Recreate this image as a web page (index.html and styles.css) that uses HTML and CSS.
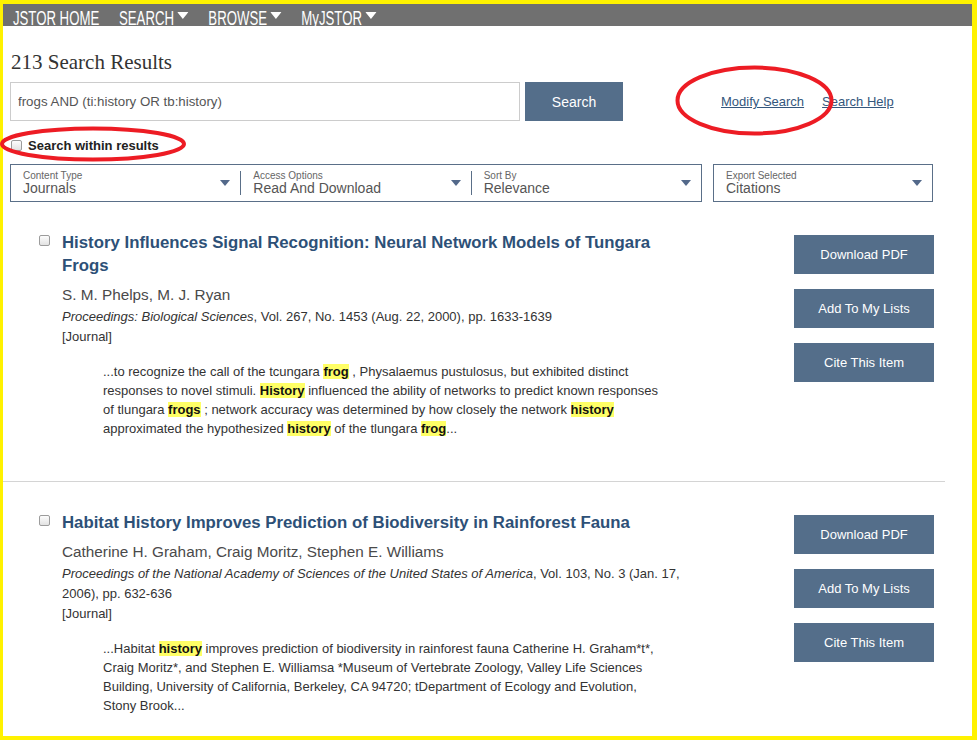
FILE: index.html
```html
<!DOCTYPE html>
<html lang="en">
<head>
    <meta charset="UTF-8">
    <title>JSTOR Search Results</title>
    <link rel="stylesheet" href="styles.css">
</head>
<body>
    <div class="frame">
        <nav class="topnav">
            <ul class="topnav-links">
                <li><a href="#">JSTOR HOME</a></li>
                <li><a href="#">SEARCH</a><svg class="nav-caret" viewBox="0 0 17 7"><polygon points="0,0 17,0 8.5,7"/></svg></li>
                <li><a href="#">BROWSE</a><svg class="nav-caret" viewBox="0 0 17 7"><polygon points="0,0 17,0 8.5,7"/></svg></li>
                <li><a href="#">MyJSTOR</a><svg class="nav-caret" viewBox="0 0 17 7"><polygon points="0,0 17,0 8.5,7"/></svg></li>
            </ul>
        </nav>

        <div class="search-area">
            <h1 class="results-count">213 Search Results</h1>

            <div class="search-row">
                <input type="text" class="search-input" value="frogs AND (ti:history OR tb:history)">
                <button type="button" class="btn search-btn">Search</button>
                <a href="#" class="search-link modify">Modify Search</a>
                <a href="#" class="search-link">Search Help</a>
            </div>

            <label class="within">
                <span class="check"></span>Search within results
            </label>

            <div class="filters">
                <div class="filter-group">
                    <div class="filter">
                        <div class="filter-text">
                            <span class="filter-label">Content Type</span>
                            <span class="filter-value">Journals</span>
                        </div>
                        <svg class="filter-caret" viewBox="0 0 10 6"><polygon points="0,0 10,0 5,6"/></svg>
                    </div>
                    <div class="filter">
                        <div class="filter-text">
                            <span class="filter-label">Access Options</span>
                            <span class="filter-value">Read And Download</span>
                        </div>
                        <svg class="filter-caret" viewBox="0 0 10 6"><polygon points="0,0 10,0 5,6"/></svg>
                    </div>
                    <div class="filter">
                        <div class="filter-text">
                            <span class="filter-label">Sort By</span>
                            <span class="filter-value">Relevance</span>
                        </div>
                        <svg class="filter-caret" viewBox="0 0 10 6"><polygon points="0,0 10,0 5,6"/></svg>
                    </div>
                </div>
                <div class="filter-group export">
                    <div class="filter">
                        <div class="filter-text">
                            <span class="filter-label">Export Selected</span>
                            <span class="filter-value">Citations</span>
                        </div>
                        <svg class="filter-caret" viewBox="0 0 10 6"><polygon points="0,0 10,0 5,6"/></svg>
                    </div>
                </div>
            </div>
        </div>

        <ol class="results">
            <li class="result">
                <span class="check result-check"></span>
                <div class="result-body">
                    <a href="#" class="result-title">History Influences Signal Recognition: Neural Network Models of Tungara Frogs</a>
                    <div class="result-authors">S. M. Phelps, M. J. Ryan</div>
                    <div class="result-cite"><em>Proceedings: Biological Sciences</em>, Vol. 267, No. 1453 (Aug. 22, 2000), pp. 1633-1639</div>
                    <div class="result-type">[Journal]</div>
                    <p class="snippet">...to recognize the call of the tcungara <mark>frog</mark> , Physalaemus pustulosus, but exhibited distinct responses to novel stimuli. <mark>History</mark> influenced the ability of networks to predict known responses of tlungara <mark>frogs</mark> ; network accuracy was determined by how closely the network <mark>history</mark> approximated the hypothesized <mark>history</mark> of the tlungara <mark>frog</mark>...</p>
                </div>
                <div class="result-actions">
                    <button type="button" class="btn">Download PDF</button>
                    <button type="button" class="btn">Add To My Lists</button>
                    <button type="button" class="btn">Cite This Item</button>
                </div>
            </li>
            <li class="result">
                <span class="check result-check"></span>
                <div class="result-body">
                    <a href="#" class="result-title">Habitat History Improves Prediction of Biodiversity in Rainforest Fauna</a>
                    <div class="result-authors">Catherine H. Graham, Craig Moritz, Stephen E. Williams</div>
                    <div class="result-cite"><em>Proceedings of the National Academy of Sciences of the United States of America</em>, Vol. 103, No. 3 (Jan. 17, 2006), pp. 632-636</div>
                    <div class="result-type">[Journal]</div>
                    <p class="snippet">...Habitat <mark>history</mark> improves prediction of biodiversity in rainforest fauna Catherine H. Graham*t*, Craig Moritz*, and Stephen E. Williamsa *Museum of Vertebrate Zoology, Valley Life Sciences Building, University of California, Berkeley, CA 94720; tDepartment of Ecology and Evolution, Stony Brook...</p>
                </div>
                <div class="result-actions">
                    <button type="button" class="btn">Download PDF</button>
                    <button type="button" class="btn">Add To My Lists</button>
                    <button type="button" class="btn">Cite This Item</button>
                </div>
            </li>
        </ol>
    </div>

    <!-- hand-drawn annotation marks over the page -->
    <svg class="annotations" width="977" height="740" viewBox="0 0 977 740">
        <ellipse cx="754.5" cy="100.5" rx="77" ry="33" />
        <ellipse cx="93" cy="144" rx="91" ry="15.5" />
    </svg>
</body>
</html>
```

FILE: styles.css
```css
* {
    box-sizing: border-box;
    margin: 0;
    padding: 0;
}

body {
    font-family: "Liberation Sans", Arial, sans-serif;
    background-color: #fff;
    color: #333;
    position: relative;
    width: 977px;
    height: 740px;
    overflow: hidden;
}

.frame {
    height: 740px;
    border-style: solid;
    border-color: #fff200;
    border-width: 4px 5px 4px 3px;
    overflow: hidden;
}

/* top navigation (condensed caps) */
.topnav {
    height: 22px;
    background-color: #707070;
    overflow: hidden;
}

.topnav-links {
    list-style: none;
    display: flex;
    padding: 6px 0 0 15px;
    font-size: 20px;
    line-height: 16px;
    transform: scaleX(0.66);
    transform-origin: left top;
}

.topnav-links li {
    display: flex;
    align-items: flex-start;
    margin-right: 30px;
}

.topnav-links a {
    color: #fff;
    text-decoration: none;
}

.nav-caret {
    width: 17px;
    height: 7px;
    margin: 2px 0 0 5px;
    fill: #fff;
}

/* search header */
.search-area {
    padding: 0 7px;
}

.results-count {
    font-family: "Liberation Serif", "Times New Roman", serif;
    font-weight: normal;
    font-size: 21px;
    line-height: 24px;
    color: #333;
    margin-top: 24px;
    padding-left: 1px;
}

.search-row {
    display: flex;
    align-items: center;
    margin-top: 8px;
}

.search-input {
    width: 510px;
    height: 39px;
    border: 1px solid #ccc;
    padding: 0 7px;
    font-family: inherit;
    font-size: 13.3px;
    color: #555;
}

.btn {
    background-color: #546e8a;
    color: #fff;
    border: none;
    font-family: inherit;
    font-size: 13px;
    cursor: pointer;
}

.search-btn {
    width: 98px;
    height: 39px;
    margin-left: 5px;
    font-size: 14px;
}

.search-link {
    font-size: 13px;
    color: #34577d;
    margin-left: 18px;
}

.search-link.modify {
    margin-left: 98px;
}

.within {
    display: flex;
    align-items: center;
    height: 16px;
    margin-top: 16px;
    padding-left: 1px;
    font-size: 13px;
    font-weight: bold;
    color: #222;
}

.check {
    display: inline-block;
    width: 11px;
    height: 11px;
    border: 1px solid #9c9c9c;
    border-radius: 2px;
    background: linear-gradient(#fdfdfd, #e2e2e2);
    margin-right: 6px;
    flex: none;
}

/* filter dropdowns */
.filters {
    display: flex;
    margin-top: 11px;
}

.filter-group {
    display: flex;
    width: 692px;
    height: 38px;
    border: 1px solid #5a6f88;
    padding: 6px 0;
}

.filter-group.export {
    width: 220px;
    margin-left: 11px;
}

.filter {
    flex: 1;
    display: flex;
    align-items: center;
    padding: 0 10px 0 12px;
}

.filter + .filter {
    border-left: 1px solid #5a6f88;
}

.filter-text {
    flex: 1;
    display: flex;
    flex-direction: column;
}

.filter-label {
    font-size: 10px;
    line-height: 9px;
    color: #666;
}

.filter-value {
    font-size: 14px;
    line-height: 16px;
    color: #555;
}

.filter-caret {
    width: 10px;
    height: 6px;
    fill: #53698a;
}

/* results */
.results {
    list-style: none;
}

.result {
    display: flex;
    align-items: flex-start;
    width: 942px;
    padding: 29px 11px 43px 36px;
}

.result + .result {
    border-top: 1px solid #d4d4d4;
}

.result-check {
    margin: 4px 12px 0 0;
}

.result-body {
    width: 625px;
}

.result-title {
    display: block;
    font-size: 16.8px;
    line-height: 23px;
    font-weight: bold;
    color: #2d5077;
    text-decoration: none;
}

.result-authors {
    font-size: 15.3px;
    line-height: 20px;
    color: #4a4a4a;
    margin-top: 8px;
}

.result-cite,
.result-type {
    font-size: 13px;
    line-height: 20px;
    color: #333;
}

.result-cite {
    margin-top: 2px;
}

.snippet {
    width: 556px;
    margin: 15px 0 0 41px;
    font-size: 13px;
    line-height: 19px;
    color: #333;
}

.snippet mark {
    background-color: #ffff66;
    color: #111;
    font-weight: bold;
}

.result-actions {
    display: flex;
    flex-direction: column;
    gap: 15px;
    margin: 4px 0 0 auto;
}

.result-actions .btn {
    width: 140px;
    height: 39px;
}

/* red marker rings */
.annotations {
    position: absolute;
    top: 0;
    left: 0;
    pointer-events: none;
}

.annotations ellipse {
    fill: none;
    stroke: #ed1c24;
    stroke-width: 4;
}
```
